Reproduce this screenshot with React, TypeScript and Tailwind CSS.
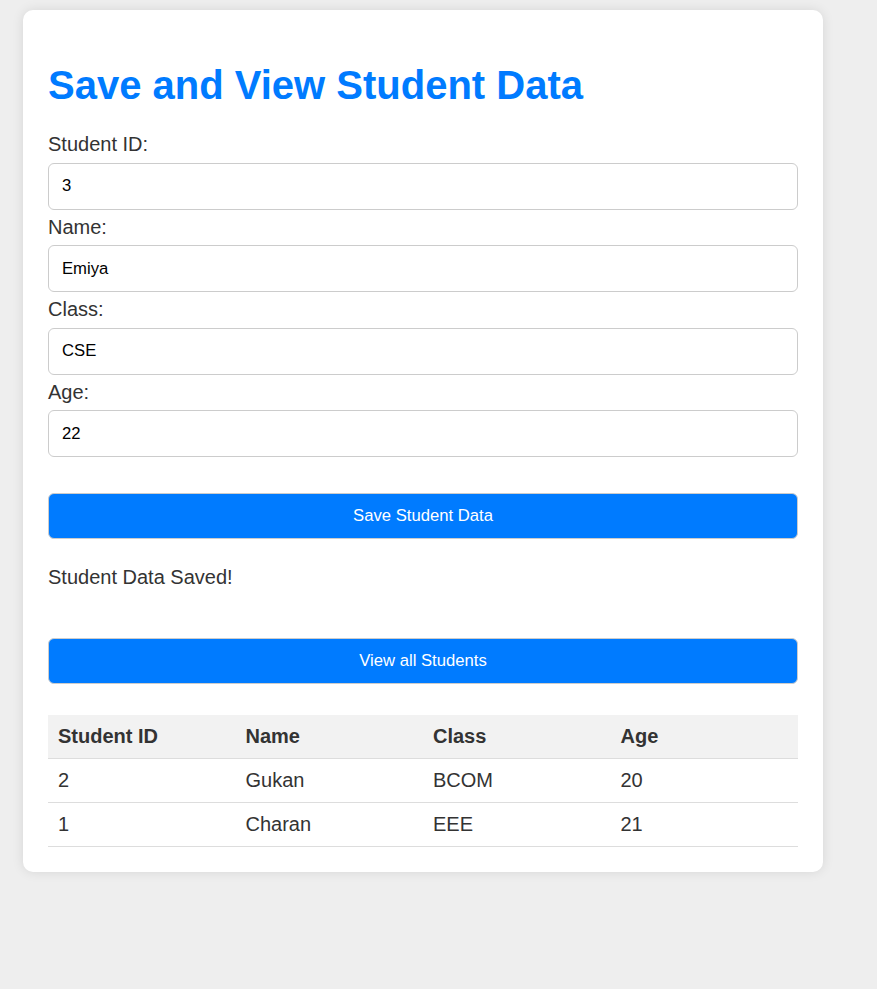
import React from "react";

const font = { fontFamily: '"Liberation Sans", Arial, sans-serif' };

const fields = [
  { label: "Student ID:", value: "3" },
  { label: "Name:", value: "Emiya" },
  { label: "Class:", value: "CSE" },
  { label: "Age:", value: "22" },
];

const rows = [
  ["2", "Gukan", "BCOM", "20"],
  ["1", "Charan", "EEE", "21"],
];

export default function App() {
  return (
    <div className="min-h-[989px] bg-[#eeeeee] pt-[10px] pl-[23px]" style={font}>
      <div className="w-[800px] bg-white rounded-[10px] shadow-[0_0_12px_rgba(0,0,0,0.1)] p-[25px] text-[#333333] text-[20px] leading-[23px]">
        <h1 className="text-[40px] leading-[45px] font-bold text-[#007bff] mt-[28px] mb-[25.4px]">
          Save and View Student Data
        </h1>
        <div className="flex flex-col">
          {fields.map((f) => (
            <div key={f.label} className="flex flex-col">
              <label className="block h-[23px]">{f.label}</label>
              <input
                readOnly
                value={f.value}
                className="block w-full h-[47px] my-[6.25px] px-[13px] border border-[#cccccc] rounded-[6px] text-[16.67px] text-black outline-none bg-white"
                style={font}
              />
            </div>
          ))}
        </div>
        <button
          className="block w-full h-[46px] mt-[29.5px] bg-[#007bff] text-white text-[16.67px] border border-[#cccccc] rounded-[6px]"
          style={font}
        >
          Save Student Data
        </button>
        <p className="mt-[27px] h-[23px]">Student Data Saved!</p>
        <button
          className="block w-full h-[46px] mt-[49px] bg-[#007bff] text-white text-[16.67px] border border-[#cccccc] rounded-[6px]"
          style={font}
        >
          View all Students
        </button>
        <table className="w-full table-fixed border-collapse mt-[31px]">
          <thead>
            <tr className="bg-[#f2f2f2]">
              {["Student ID", "Name", "Class", "Age"].map((h) => (
                <th key={h} className="text-left font-bold px-[10px] py-[10px] border-b border-[#dddddd] leading-[23px]">
                  {h}
                </th>
              ))}
            </tr>
          </thead>
          <tbody>
            {rows.map((r) => (
              <tr key={r[0]}>
                {r.map((c, i) => (
                  <td key={i} className="px-[10px] py-[10px] border-b border-[#dddddd] leading-[23px]">
                    {c}
                  </td>
                ))}
              </tr>
            ))}
          </tbody>
        </table>
      </div>
    </div>
  );
}
